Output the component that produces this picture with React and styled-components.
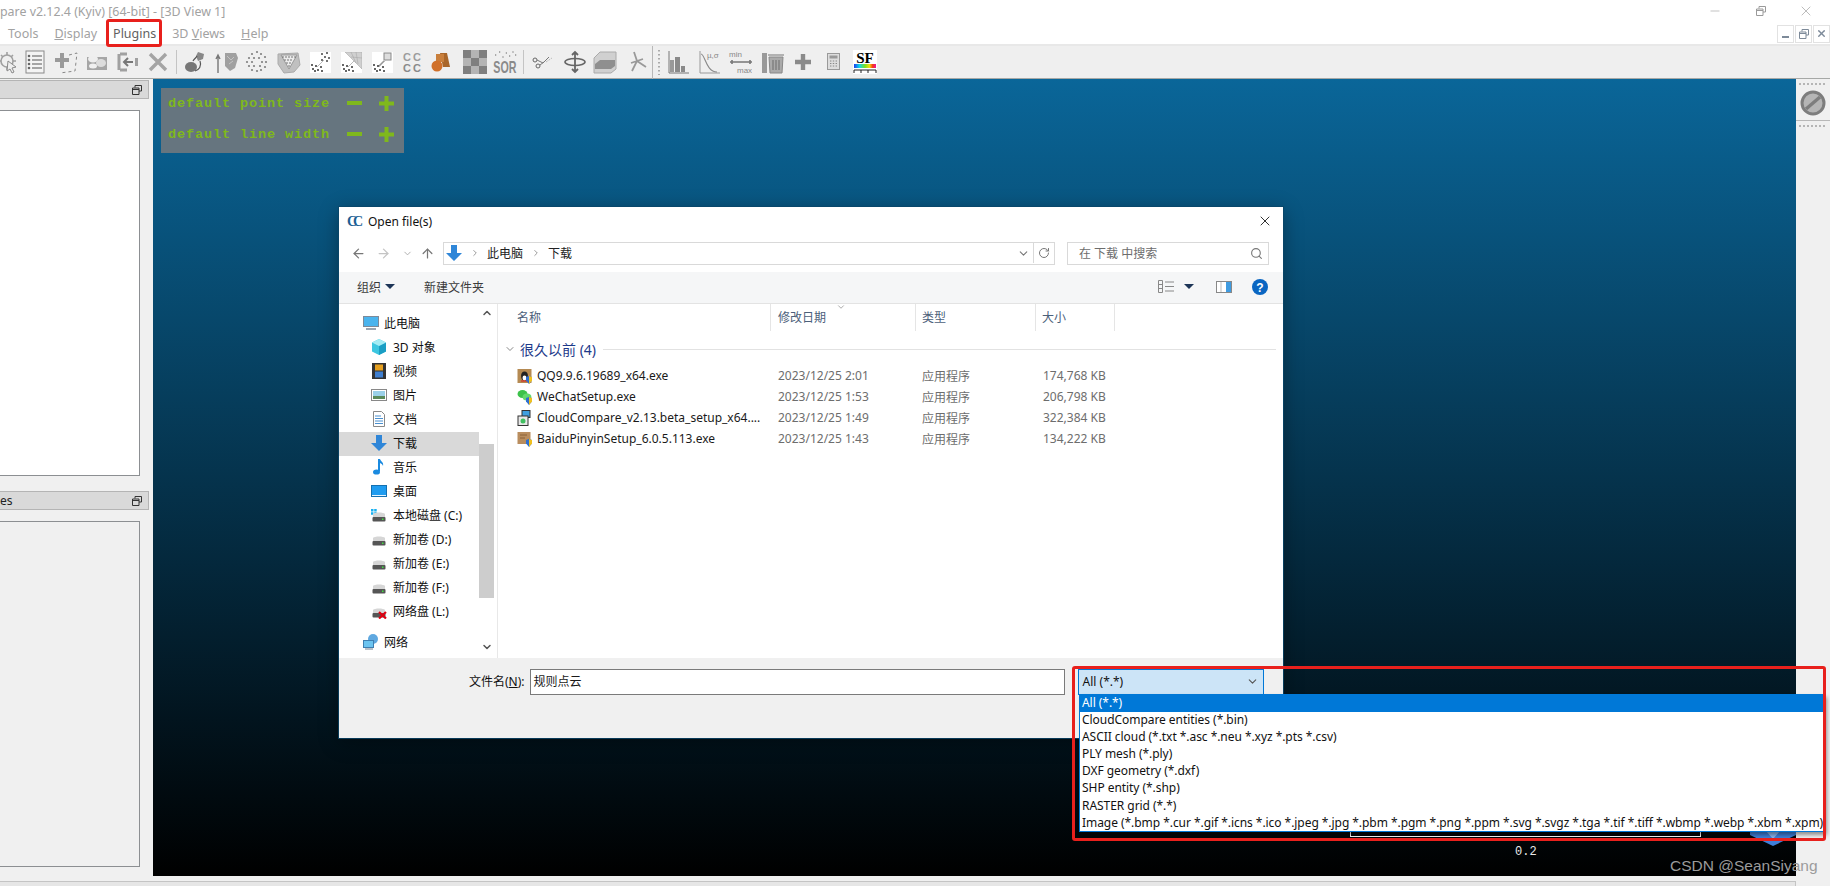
import React from "react"
import styled, { createGlobalStyle } from "styled-components"
import { ChevronDown, ChevronRight, ChevronUp, ArrowLeft, ArrowRight, ArrowUp, RotateCw, Search, X, Minus } from "lucide-react"

const GlobalStyle = createGlobalStyle`
	html, body { margin: 0; padding: 0; background: #f0f0f0; overflow: hidden; }
	* { box-sizing: border-box; }
	body { font-family: "Noto Sans", "Noto Sans CJK SC", sans-serif; font-size: 12px; }
`

const Page = styled.div`
	position: relative;
	width: 1830px;
	height: 886px;
	overflow: hidden;
	display: flex;
	flex-direction: column;
`

/* window chrome */
const TitleBar = styled.div`
	height: 22px;
	background: #fff;
	display: flex;
	justify-content: space-between;
	align-items: center;
	color: #a2a2a2;
	font-size: 12.4px;
	white-space: nowrap;
`
const WinButtons = styled.div`
	display: flex;
	margin-right: 1px;
`
const WinButton = styled.div`
	width: 45.5px;
	height: 20px;
	display: flex;
	align-items: center;
	justify-content: center;
	color: #9a9a9a;
`
const MenuBar = styled.div`
	height: 22px;
	background: #fff;
	display: flex;
	align-items: center;
	padding-left: 8px;
	gap: 16px;
	color: #a2a2a2;
	font-size: 12.5px;
`
const MenuItem = styled.div`
	position: relative;
	color: ${(props) => (props.$active ? "#5f5f5f" : "#a2a2a2")};
	${(props) =>
		props.$active
			? `
        &::after {
            content: "";
            position: absolute;
            left: -7px;
            right: -6px;
            top: -6px;
            bottom: -5px;
            border: 3px solid #e8201c;
            border-radius: 3px;
        }
    `
			: ""}
`
const MdiButtons = styled.div`
	margin-left: auto;
	display: flex;
	gap: 1px;
	padding-top: 1px;
`
const MdiButton = styled.div`
	width: 17px;
	height: 18px;
	border: 1px solid #e2e2e2;
	display: flex;
	align-items: center;
	justify-content: center;
`
const ToolBar = styled.div`
	height: 35px;
	background: #efefef;
	border-top: 2px solid #e8e8e8;
	border-bottom: 1px solid #a6a8a6;
	display: flex;
	align-items: center;
`
const Tool = styled.div`
	width: 24px;
	height: 26px;
	flex: none;
	margin-left: ${(props) => props.$left}px;
	display: flex;
	align-items: center;
	justify-content: center;
`
const Main = styled.div`
	flex: 1;
	display: flex;
	min-height: 0;
`
const CenterColumn = styled.div`
	width: 1796px;
	display: flex;
	flex-direction: column;
`
const Workspace = styled.div`
	height: 797px;
	display: flex;
`
const StatusGap = styled.div`
	height: 5px;
	background: #f0f0f0;
`
const StatusBar = styled.div`
	flex: 1;
	background: #e6e6e6;
	border-top: 1px solid #c4c4c4;
	border-right: 1px solid #c4c4c4;
`

/* left docks */
const LeftPanel = styled.div`
	width: 153px;
	flex: none;
	background: #f0f0f0;
	padding-top: 1px;
`
const DockTitle = styled.div`
	width: 149px;
	height: 19px;
	background: #d9d9d9;
	border: 1px solid #b4b4b4;
	border-left: none;
	margin-top: ${(props) => props.$top || 0}px;
	display: flex;
	align-items: center;
	justify-content: space-between;
	padding-right: 6px;
	font-size: 12px;
	color: #222;
`
const DockBox = styled.div`
	width: 140px;
	height: ${(props) => props.$height}px;
	margin-top: 11px;
	background: ${(props) => (props.$white ? "#fff" : "#f0f0f0")};
	border: 1px solid #8c8f92;
	border-left: none;
`

/* 3D view */
const Viewport = styled.div`
	position: relative;
	flex: 1;
	background: linear-gradient(180deg, #0a6699 0%, #000 100%);
`
const HotZone = styled.div`
	position: absolute;
	left: 8px;
	top: 9px;
	width: 243px;
	height: 65px;
	background: #66757f;
	padding: 0 7px 3px;
	display: flex;
	flex-direction: column;
	justify-content: space-around;
`
const HotRow = styled.div`
	display: flex;
	align-items: center;
	color: #7fb81c;
	font-family: "Liberation Mono", monospace;
	font-weight: 700;
	font-size: 13.5px;
	letter-spacing: 0.9px;
	white-space: nowrap;
`
const HotLabel = styled.span`
	width: 179px;
`
const ScaleBar = styled.div`
	position: absolute;
	left: 1197px;
	top: 753px;
	width: 351px;
	height: 5px;
	border: 1px solid #fff;
	border-top: none;
`
const ScaleLabel = styled.div`
	position: absolute;
	left: 1362px;
	top: 766px;
	color: #e8e8e8;
	font-family: "Liberation Mono", monospace;
	font-size: 12px;
`
const Pivot = styled.svg`
	position: absolute;
	right: 0;
	top: 750px;
`
const Watermark = styled.div`
	position: absolute;
	left: 1670px;
	top: 857px;
	color: #9b9b9b;
	font-family: "Liberation Sans", sans-serif;
	font-size: 15.5px;
	white-space: nowrap;
	z-index: 4;
`
const RightBar = styled.div`
	flex: 1;
	background: #f0f0f0;
	display: flex;
	flex-direction: column;
	align-items: center;
	padding-top: 4px;
`
const Grip = styled.div`
	width: 28px;
	height: 2px;
	background: repeating-linear-gradient(90deg, #b5b5b5 0 2px, transparent 2px 4px);
`
const RightTool = styled.div`
	width: 100%;
	height: 36px;
	display: flex;
	align-items: center;
	justify-content: center;
	border-bottom: 1px solid #b8b8b8;
	margin-bottom: 4px;
`

/* file dialog */
const Dialog = styled.div`
	position: absolute;
	left: 186px;
	top: 128px;
	width: 944px;
	height: 531px;
	z-index: 1;
	background: #fff;
	box-shadow: 0 0 0 1px rgba(10, 70, 105, 0.8), 0 4px 18px rgba(0, 0, 0, 0.35);
	display: flex;
	flex-direction: column;
	color: #1a1a1a;
`
const DialogTitle = styled.div`
	height: 35px;
	flex: none;
	display: flex;
	align-items: center;
	padding: 0 10px 7px 8px;
	gap: 5px;
	font-size: 12px;
	color: #111;
`
const CloseX = styled.div`
	margin-left: auto;
	display: flex;
`
const AddressRow = styled.div`
	height: 23px;
	flex: none;
	display: flex;
	align-items: center;
	padding-left: 11px;
`
const NavGlyph = styled.div`
	width: ${(props) => props.$w}px;
	display: flex;
	justify-content: center;
	color: ${(props) => props.$color};
`
const AddressBox = styled.div`
	width: 612px;
	height: 23px;
	margin-left: 3px;
	border: 1px solid #d9d9d9;
	display: flex;
	align-items: center;
	padding: 0 0 1px 2px;
	color: #222;
`
const Crumb = styled.span`
	margin-right: ${(props) => props.$gap || 0}px;
`
const AddressEnd = styled.div`
	margin-left: auto;
	height: 100%;
	display: flex;
	align-items: center;
`
const RefreshCell = styled.div`
	width: 21px;
	height: 100%;
	margin-left: 3px;
	border-left: 1px solid #d9d9d9;
	display: flex;
	align-items: center;
	justify-content: center;
	color: #777;
`
const SearchBox = styled.div`
	width: 202px;
	height: 23px;
	margin-left: 12px;
	border: 1px solid #d9d9d9;
	display: flex;
	align-items: center;
	justify-content: space-between;
	padding: 0 5px 1px 11px;
	color: #6d6d6d;
`
const CommandBar = styled.div`
	height: 32px;
	flex: none;
	margin-top: 7px;
	background: #f5f6f7;
	border-bottom: 1px solid #e3e3e3;
	display: flex;
	align-items: center;
	padding: 0 0 2px 18px;
	color: #3b3b3b;
`
const CommandRight = styled.div`
	margin-left: auto;
	display: flex;
	align-items: center;
	padding-right: 15px;
`
const DownCaret = styled.span`
	width: 0;
	height: 0;
	border-left: 5px solid transparent;
	border-right: 5px solid transparent;
	border-top: 5px solid #1d3557;
	margin: ${(props) => props.$margin};
`
const NewFolder = styled.span`
	margin-left: 29px;
`
const Body = styled.div`
	height: 354px;
	flex: none;
	display: flex;
`
const NavPane = styled.div`
	width: 140px;
	flex: none;
	padding-top: 8px;
`
const NavRow = styled.div`
	height: 24px;
	display: flex;
	align-items: center;
	margin-top: ${(props) => props.$top || 0}px;
	padding-left: ${(props) => props.$indent}px;
	padding-bottom: 2px;
	background: ${(props) => (props.$selected ? "#d9d9d9" : "transparent")};
	color: #111;
	gap: ${(props) => props.$gap || 6}px;
	white-space: nowrap;
`
const NavIcon = styled.span`
	width: 16px;
	height: 16px;
	flex: none;
	display: flex;
`
const ScrollTrack = styled.div`
	width: 15px;
	flex: none;
	display: flex;
	flex-direction: column;
	align-items: center;
	color: #555;
	padding-top: 3px;
`
const ScrollThumb = styled.div`
	width: 15px;
	height: 154px;
	margin-top: 125px;
	background: #cdcdcd;
`
const ScrollDown = styled.div`
	margin-top: auto;
	padding-bottom: 1px;
`
const ListPane = styled.div`
	flex: 1;
	margin-left: 3px;
	border-left: 1px solid #e8e8e8;
`
const ListGrid = styled.div`
	display: grid;
	grid-template-columns: 273px 145px 120px 79px;
	height: ${(props) => props.$height}px;
	padding-bottom: ${(props) => props.$lift || 0}px;
	align-items: center;
`
const HeaderCell = styled.div`
	position: relative;
	height: 100%;
	display: flex;
	align-items: center;
	padding-left: ${(props) => props.$pad}px;
	padding-bottom: 2px;
	border-right: 1px solid #e5e5e5;
	color: #4c607a;
`
const SortMark = styled.span`
	position: absolute;
	left: 65px;
	top: -2px;
	display: flex;
	color: #9a9a9a;
`
const GroupRow = styled.div`
	height: 20px;
	margin-top: 9px;
	margin-bottom: 6px;
	padding: 0 7px 2px 6px;
	display: flex;
	align-items: center;
	gap: 4px;
	color: #1e3a8a;
	font-size: 14px;
`
const GroupLine = styled.div`
	flex: 1;
	height: 1px;
	margin-left: 3px;
	background: #e2e2e2;
`
const NameCell = styled.div`
	display: flex;
	align-items: center;
	gap: 4px;
	padding-left: 19px;
	color: #1a1a1a;
	white-space: nowrap;
`
const InfoCell = styled.div`
	padding-left: ${(props) => props.$pad}px;
	color: #6d6d6d;
	white-space: nowrap;
`
const Footer = styled.div`
	flex: 1;
	background: #f0f0f0;
	padding: 11px 0 0 130px;
	display: flex;
	align-items: flex-start;
	position: relative;
`
const FileLabel = styled.label`
	height: 26px;
	display: flex;
	align-items: center;
	padding-bottom: 2px;
	color: #111;
`
const FileInput = styled.div`
	width: 535px;
	height: 26px;
	margin-left: 5px;
	background: #fff;
	border: 1px solid #7a7a7a;
	display: flex;
	align-items: center;
	padding: 0 0 2px 3px;
`
const Combo = styled.div`
	width: 186px;
	height: 26px;
	margin-left: 13px;
	background: #cce4f7;
	border: 1px solid #0078d7;
	display: flex;
	align-items: center;
	justify-content: space-between;
	padding: 0 4px 2px;
	color: #111;
`
const Popup = styled.div`
	position: absolute;
	left: 740px;
	top: 36px;
	width: 745px;
	height: 138px;
	background: #fff;
	border: 1px solid #0078d7;
	box-shadow: 3px 3px 4px rgba(0, 0, 0, 0.4);
	z-index: 2;
`
const PopupItem = styled.div`
	height: 17.1px;
	line-height: 16px;
	padding-left: 2px;
	background: ${(props) => (props.$selected ? "#0078d7" : "transparent")};
	color: ${(props) => (props.$selected ? "#fff" : "#111")};
	white-space: nowrap;
	font-size: 12px;
	letter-spacing: -0.05px;
`
const RedFrame = styled.div`
	position: absolute;
	left: 1072px;
	top: 666px;
	width: 754px;
	height: 175px;
	border: 3px solid #e8201c;
	border-radius: 3px;
	pointer-events: none;
	z-index: 3;
`

/* toolbar drawings */
const G = "#8a8a8a"
const Dots = ({ pts, r = 1.3, fill = "#555" }) => pts.map(([x, y], i) => <circle key={i} cx={x} cy={y} r={r} fill={fill} />)
const Svg = ({ w = 24, h = 24, children }) => (
	<svg width={w} height={h} viewBox={`0 0 ${w} ${h}`}>
		{children}
	</svg>
)
const GearIcon = () => (
	<Svg>
		<circle cx="11" cy="11" r="6" fill="none" stroke="#a0a0a0" strokeWidth="1.6" />
		<path d="M11 2v3M11 17v3M2 11h3M17 11h3M5 5l2 2M15 15l2 2M17 5l-2 2" stroke="#a0a0a0" strokeWidth="1.6" />
		<path d="M12 11l8 6-4 1 2 4-2 1-2-4-3 2z" fill="#eee" stroke={G} />
	</Svg>
)
const ListIcon = () => (
	<Svg>
		<rect x="3" y="1" width="18" height="22" fill="#f4f4f4" stroke={G} />
		<path d="M9 6h10M9 10h10M9 14h10M9 18h10" stroke={G} strokeWidth="1.3" />
		<Dots pts={[[6, 6], [6, 10], [6, 14], [6, 18]]} fill="#666" />
	</Svg>
)
const PlusBoxIcon = () => (
	<Svg>
		<path d="M1 10h14M8 3v15" stroke="#9a9a9a" strokeWidth="4" />
		<path d="M15 5l8-2-2 18-15 2" fill="none" stroke="#888" strokeDasharray="3 3" />
	</Svg>
)
const CloudsIcon = () => (
	<Svg>
		<path d="M2 7h20v13H2z" fill="#a6a6a6" />
		<ellipse cx="8" cy="9" rx="5" ry="3.5" fill="#eee" />
		<ellipse cx="16" cy="13" rx="5" ry="4" fill="#ddd" />
		<ellipse cx="8" cy="16" rx="4" ry="2.5" fill="#f0f0f0" />
	</Svg>
)
const MergeIcon = () => (
	<Svg>
		<path d="M4 4h7M4 20h7M3 4v16" stroke="#a0a0a0" strokeWidth="3" fill="none" />
		<path d="M19 8h3v8h-3z" fill="#a0a0a0" />
		<path d="M17 12H9M12 8l-4 4 4 4" stroke="#777" strokeWidth="2" fill="none" />
	</Svg>
)
const CrossIcon = () => (
	<Svg>
		<path d="M4 4l16 16M20 4L4 20" stroke="#a4a4a4" strokeWidth="3.4" />
	</Svg>
)
const Sep = ({ h = 24, c = "#c4c4c4" }) => <svg width="2" height={h}><rect width="1" height={h} fill={c} /></svg>
const BlobIcon = () => (
	<Svg>
		<ellipse cx="8" cy="17" rx="6" ry="5" fill="#777" />
		<path d="M15 2l6 2-1 5-5 2-2-5z" fill="#888" />
		<path d="M17 11c2 5-1 9-5 10M10 11c1-2 3-3 4-5" stroke="#555" fill="none" strokeWidth="1.2" />
	</Svg>
)
const ShieldIcon = () => (
	<Svg>
		<path d="M3 23V6M1 9l2-4 2 4" stroke="#777" strokeWidth="1.4" fill="none" />
		<path d="M10 3h11l2 5-3 10-5 3-5-5z" fill="#a0a0a0" />
		<path d="M12 6l4 4 3-3M14 14l4-3" stroke="#c4c4c4" fill="none" />
	</Svg>
)
const DotRingIcon = () => (
	<Svg>
		<Dots r={1.1} fill="#808080" pts={[[12, 2], [7, 4], [16, 4], [20, 7], [4, 8], [9, 8], [14, 8], [21, 12], [2, 12], [7, 12], [17, 12], [4, 16], [9, 16], [15, 16], [20, 17], [7, 20], [12, 21], [16, 20]]} />
	</Svg>
)
const MeshIcon = () => (
	<Svg>
		<path d="M1 4l20-1 2 12-6 7-10 1-6-9z" fill="#c0c0c0" stroke="#aaa" />
		<path d="M4 5l16 0-8 14z" fill="#ececec" stroke="#999" />
		<Dots r={0.8} fill="#666" pts={[[6, 7], [9, 7], [12, 7], [15, 7], [18, 7], [8, 10], [11, 10], [14, 10], [10, 13], [13, 13], [12, 16]]} />
	</Svg>
)
const ScatterIcon = ({ corner }) => (
	<svg width="21" height="21" viewBox="0 0 21 21">
		<rect width="21" height="21" fill="#fff" />
		{corner === "mesh" && <path d="M4 0h17v17z M10 0l5 11M21 6L10 5M15 0l2 12" fill="#d0d0d0" stroke="#aaa" strokeWidth=".6" />}
		{corner === "box" && <g><rect x="12" y="1" width="7" height="7" fill="#ddd" stroke="#888" /><path d="M12 9l-5 5" stroke="#999" strokeWidth="1.4" /></g>}
		{corner === "dots" && <Dots r={1} fill="#444" pts={[[12, 2], [17, 1], [15, 5], [19, 6], [17, 9], [12, 8]]} />}
		<path d="M7 15l7-7" stroke="#bbb" strokeWidth="1" />
		<Dots r={1} fill="#333" pts={[[2, 13], [6, 14], [3, 17], [8, 18], [11, 15], [5, 19], [12, 19]]} />
	</svg>
)
const CcIcon = () => (
	<Svg>
		<text x="2" y="11" fontFamily="Liberation Sans" fontWeight="700" fontSize="11" letterSpacing="2" fill="#9c9c9c">CC</text>
		<text x="2" y="22" fontFamily="Liberation Sans" fontWeight="700" fontSize="11" letterSpacing="2" fill="#8a8a8a">CC</text>
	</Svg>
)
const OrangeIcon = () => (
	<Svg>
		<path d="M12 3h7l3 14h-7z" fill="#a9662a" />
		<rect x="8" y="4" width="8" height="8" fill="#c97f3c" />
		<circle cx="9" cy="16" r="5.5" fill="#d0702a" />
	</Svg>
)
const CheckerIcon = () => (
	<svg width="24" height="24">
		{[0, 1, 2].map((r) => [0, 1, 2].map((c) => <rect key={`${r}${c}`} x={c * 8} y={r * 8} width="8" height="8" fill={(r + c) % 2 ? "#b4b4b4" : "#7f7f7f"} />))}
	</svg>
)
const SorIcon = () => (
	<svg width="24" height="24" viewBox="0 0 36 24" preserveAspectRatio="none">
		<text x="0.5" y="23" fontFamily="Liberation Sans" fontWeight="700" fontSize="16" fill="#8a8a8a">SOR</text>
		<Dots r={1} fill="#999" pts={[[4, 5], [10, 2], [15, 7], [20, 3], [25, 6], [30, 2], [34, 5]]} />
	</svg>
)
const ScissorsIcon = () => (
	<Svg>
		<circle cx="4" cy="10" r="2" fill="none" stroke="#666" />
		<circle cx="7" cy="16" r="2" fill="none" stroke="#666" />
		<path d="M6 10l6 3 6-6M9 15l4-3" stroke="#777" fill="none" />
		<path d="M15 12l6-4" stroke="#bbb" strokeDasharray="2 1" />
	</Svg>
)
const MoveIcon = () => (
	<Svg>
		<path d="M12 2v20M9 5l3-3 3 3M9 19l3 3 3-3" stroke="#666" strokeWidth="1.8" fill="none" />
		<ellipse cx="12" cy="12" rx="10" ry="3.5" stroke="#666" strokeWidth="1.6" fill="none" />
	</Svg>
)
const SliceIcon = () => (
	<Svg>
		<path d="M1 8l6-6h16v17l-5 4H1z" fill="#d0d0d0" stroke="#aaa" />
		<path d="M2 14l5-4h15v6l-4 3H2z" fill="#8f8f8f" />
	</Svg>
)
const CompassIcon = () => (
	<Svg>
		<path d="M9 2l3 9-5 10M12 11l9 6M6 13l12-4" stroke="#999" strokeWidth="1.8" fill="none" />
	</Svg>
)
const GripTall = () => (
	<svg width="2" height="26">
		{[1, 5, 9, 13, 17, 21, 25].map((y) => <rect key={y} y={y} width="2" height="1.5" fill="#aaa" />)}
	</svg>
)
const HistIcon = () => (
	<Svg>
		<path d="M2 1v22h20" stroke="#777" strokeWidth="1" fill="none" />
		<rect x="3" y="10" width="4" height="12" fill="#999" />
		<rect x="8" y="7" width="5" height="15" fill="#8a8a8a" />
		<rect x="14" y="16" width="4" height="6" fill="#8a8a8a" />
	</Svg>
)
const GaussIcon = () => (
	<Svg>
		<path d="M2 1v22h20" stroke="#999" fill="none" />
		<path d="M3 4c4 0 5 18 16 18" stroke="#888" strokeWidth="1.1" fill="none" />
		<text x="9" y="8" fontFamily="Liberation Sans" fontSize="8" fill="#888">µ,σ</text>
	</Svg>
)
const MinMaxIcon = () => (
	<svg width="28" height="24">
		<text x="1" y="7" fontFamily="Liberation Sans" fontSize="8" fill="#888">min</text>
		<text x="9" y="23" fontFamily="Liberation Sans" fontSize="8" fill="#888">max</text>
		<path d="M2 12h22M4 10v4M22 10v4" stroke="#777" strokeWidth="1.6" />
	</svg>
)
const TrashIcon = () => (
	<Svg>
		<rect x="1" y="3" width="5" height="20" fill="#999" />
		<path d="M8 7h14l-1 16H9z" fill="#aaa" stroke="#888" />
		<path d="M7 5h16M12 10v10M15 10v10M18 10v10" stroke="#777" strokeWidth="1.2" />
	</Svg>
)
const FatPlusIcon = () => (
	<svg width="16" height="16">
		<path d="M8 0v16M0 8h16" stroke="#8a8a8a" strokeWidth="4.4" />
	</svg>
)
const CalcIcon = () => (
	<svg width="14" height="18">
		<rect x=".5" y=".5" width="12" height="16" fill="#ddd" stroke="#999" />
		<rect x="2.5" y="2.5" width="8" height="3" fill="#999" />
		<path d="M3 8h7M3 10.5h7M3 13h7" stroke="#888" strokeDasharray="1.4 1.4" />
	</svg>
)
const SfIcon = () => (
	<svg width="24" height="24">
		<rect width="24" height="24" fill="#fff" />
		<text x="12" y="13" textAnchor="middle" fontFamily="Liberation Serif" fontWeight="700" fontSize="15" fill="#000">SF</text>
		<defs>
			<linearGradient id="rainbow">
				<stop offset="0" stopColor="#1c3cf0" />
				<stop offset=".25" stopColor="#10d8e8" />
				<stop offset=".5" stopColor="#7be020" />
				<stop offset=".7" stopColor="#f2e010" />
				<stop offset=".85" stopColor="#f23a10" />
				<stop offset="1" stopColor="#f010a0" />
			</linearGradient>
		</defs>
		<rect x="1" y="14" width="22" height="4" fill="url(#rainbow)" />
		<path d="M1 20h22M1 20v3M8 20v3M15 20v3M23 20v3" stroke="#222" fill="none" />
	</svg>
)

const TOOLS = [
	[8, <GearIcon />], [35, <ListIcon />], [66, <PlusBoxIcon />], [97, <CloudsIcon />], [128, <MergeIcon />], [158, <CrossIcon />],
	[177, <Sep />], [195, <BlobIcon />], [227, <ShieldIcon />], [257, <DotRingIcon />], [289, <MeshIcon />],
	[320, <ScatterIcon corner="dots" />], [351, <ScatterIcon corner="mesh" />], [382, <ScatterIcon corner="box" />],
	[413, <CcIcon />], [440, <OrangeIcon />], [475, <CheckerIcon />], [505, <SorIcon />], [524, <Sep />],
	[543, <ScissorsIcon />], [575, <MoveIcon />], [605, <SliceIcon />], [637, <CompassIcon />], [653, <Sep h={33} c="#b8b8b8" />],
	[659, <GripTall />], [679, <HistIcon />], [710, <GaussIcon />], [740, <MinMaxIcon />], [773, <TrashIcon />],
	[803, <FatPlusIcon />], [834, <CalcIcon />], [865, <SfIcon />],
]

const RestoreIcon = ({ color = "#333" }) => (
	<svg width="10" height="10" viewBox="0 0 10 10">
		<path d="M3 2.5V.5h6.5V6H7M.5 3h6.5v6.5H.5zM.5 4.5h6.5" fill="none" stroke={color} />
	</svg>
)

/* overlay +/- */
const HotMinus = () => (
	<svg width="15" height="5">
		<rect width="15" height="4" fill="#7fb81c" />
	</svg>
)
const HotPlusMark = styled.svg`
	margin-left: 17px;
`
const HotPlus = () => (
	<HotPlusMark width="15" height="15">
		<path d="M7.5 0v15M0 7.5h15" stroke="#7fb81c" strokeWidth="4" />
	</HotPlusMark>
)

/* nav and file icons */
const Ic = ({ children, w = 16 }) => (
	<svg width={w} height="16" viewBox="0 0 16 16">
		{children}
	</svg>
)
const PcIcon = () => <Ic><rect x="0.5" y="1.5" width="15" height="10" fill="#4ab4ee" stroke="#7d8a99" /><path d="M3 14h10" stroke="#9aa5b1" strokeWidth="2" /></Ic>
const CubeIcon = () => <Ic><path d="M8 0l7 3.5v9L8 16l-7-3.5v-9z" fill="#3cc6e0" /><path d="M8 7v9l7-3.5v-9z" fill="#1a9ec4" /><path d="M1 3.5L8 0l7 3.5L8 7z" fill="#a4ecf4" /></Ic>
const FilmIcon = () => <Ic><rect x="1" y="0" width="14" height="16" fill="#333" /><rect x="4" y="1.5" width="8" height="6" fill="#e6a020" /><rect x="4" y="8.5" width="8" height="6" fill="#3f7fd0" /></Ic>
const PicIcon = () => <Ic><rect x="0.5" y="2.5" width="15" height="11" fill="#fff" stroke="#888" /><rect x="2" y="4" width="12" height="5" fill="#9ad0e8" /><rect x="2" y="9" width="12" height="3" fill="#5a8a5a" /></Ic>
const DocIcon = () => <Ic><path d="M2.5.5h8l3 3v12h-11z" fill="#fff" stroke="#888" /><path d="M4 5h6M4 7.5h8M4 10h8M4 12.5h8" stroke="#4a90d0" /></Ic>
const DownIcon = () => <Ic><path d="M5 0h6v8h5l-8 8-8-8h5z" fill="#2f86d8" /></Ic>
const MusicIcon = () => <Ic><path d="M8 0v12" stroke="#1a8ae0" strokeWidth="2" /><ellipse cx="5.5" cy="13" rx="3.5" ry="2.6" fill="#1a8ae0" /><path d="M9 0c1 3 4 3 3 7-.5-2-2-2.5-3-3z" fill="#1a8ae0" /></Ic>
const DesktopIcon = () => <Ic><rect x="0.5" y="2.5" width="15" height="11" fill="#1f9cf0" stroke="#1470b0" /><rect x="1" y="12" width="14" height="1" fill="#e6f4ff" /></Ic>
const DriveIcon = ({ win, cross }) => (
	<Ic>
		{win && <path d="M0 2h2.5v2.5H0zM3.2 2h2.5v2.5H3.2zM0 5.2h2.5v2.5H0zM3.2 5.2h2.5v2.5H3.2z" fill="#18b0f0" />}
		<path d="M2 7c1-2 11-2 12 0v4H2z" fill="#d6d6d6" />
		<rect x="1.5" y="10" width="13" height="4.5" rx="1" fill="#555" />
		<rect x="11" y="11.5" width="1.5" height="1.5" fill="#40e040" />
		{cross && <path d="M8 9l7 6.5M15 9l-7 6.5" stroke="#e00010" strokeWidth="2.2" />}
	</Ic>
)
const NetIcon = () => <Ic><circle cx="10" cy="5" r="5" fill="#5fa8e0" /><rect x="0.5" y="6.5" width="10" height="7" fill="#6cc4f0" stroke="#3f7fb0" /><path d="M2 15h8" stroke="#9aa5b1" strokeWidth="1.4" /></Ic>

const Shield = () => <g><path d="M9 9l3-1 3 1v3.5L12 16l-3-3.5z" fill="#2f6fd0" /><path d="M12 8l3 1v3.5L12 16z" fill="#f0c020" /></g>
const QqFile = () => <Ic><rect x="0.5" y="1" width="14" height="14" fill="#b58a52" /><ellipse cx="7.5" cy="8" rx="3.4" ry="4.5" fill="#222" /><ellipse cx="7.5" cy="10" rx="2" ry="2.4" fill="#fff" /><path d="M4 13h7" stroke="#e02020" /><Shield /></Ic>
const WeChatFile = () => <Ic><ellipse cx="5.5" cy="5" rx="5" ry="4" fill="#3cc24a" /><ellipse cx="10" cy="8" rx="4.4" ry="3.6" fill="#62d86c" /><Shield /></Ic>
const CcFile = () => <Ic><rect x="5" y="0.5" width="8" height="7" fill="#3f9fe0" stroke="#333" /><rect x="1" y="6" width="10" height="9.5" fill="#e8e8e8" stroke="#333" /><circle cx="6" cy="11" r="2.5" fill="#40c060" /></Ic>
const BaiduFile = () => <Ic><rect x="0.5" y="1" width="13" height="12" fill="#b98d5e" /><path d="M3 4h7M3 7h5" stroke="#8a6238" /><Shield /></Ic>

const NAV = [
	{ label: "此电脑", Icon: PcIcon, indent: 24, gap: 5 },
	{ label: "3D 对象", Icon: CubeIcon, indent: 32 },
	{ label: "视频", Icon: FilmIcon, indent: 32 },
	{ label: "图片", Icon: PicIcon, indent: 32 },
	{ label: "文档", Icon: DocIcon, indent: 32 },
	{ label: "下载", Icon: DownIcon, indent: 32, selected: true },
	{ label: "音乐", Icon: MusicIcon, indent: 32 },
	{ label: "桌面", Icon: DesktopIcon, indent: 32 },
	{ label: "本地磁盘 (C:)", Icon: () => <DriveIcon win />, indent: 32 },
	{ label: "新加卷 (D:)", Icon: DriveIcon, indent: 32 },
	{ label: "新加卷 (E:)", Icon: DriveIcon, indent: 32 },
	{ label: "新加卷 (F:)", Icon: DriveIcon, indent: 32 },
	{ label: "网络盘 (L:)", Icon: () => <DriveIcon cross />, indent: 32 },
	{ label: "网络", Icon: NetIcon, indent: 24, gap: 5, top: 7 },
]

const FILES = [
	{ name: "QQ9.9.6.19689_x64.exe", date: "2023/12/25 2:01", size: "174,768 KB", Icon: QqFile },
	{ name: "WeChatSetup.exe", date: "2023/12/25 1:53", size: "206,798 KB", Icon: WeChatFile },
	{ name: "CloudCompare_v2.13.beta_setup_x64....", date: "2023/12/25 1:49", size: "322,384 KB", Icon: CcFile },
	{ name: "BaiduPinyinSetup_6.0.5.113.exe", date: "2023/12/25 1:43", size: "134,222 KB", Icon: BaiduFile },
]

const FILTERS = [
	"All (*.*)",
	"CloudCompare entities (*.bin)",
	"ASCII cloud (*.txt *.asc *.neu *.xyz *.pts *.csv)",
	"PLY mesh (*.ply)",
	"DXF geometry (*.dxf)",
	"SHP entity (*.shp)",
	"RASTER grid (*.*)",
	"Image (*.bmp *.cur *.gif *.icns *.ico *.jpeg *.jpg *.pbm *.pgm *.png *.ppm *.svg *.svgz *.tga *.tif *.tiff *.wbmp *.webp *.xbm *.xpm)",
]

const FileDialog = () => (
	<Dialog>
		<DialogTitle>
			<svg width="16" height="14" viewBox="0 0 16 14">
				<text x="0" y="12" fontFamily="Liberation Serif" fontWeight="700" fontSize="14" letterSpacing="-4" fill="#1c5f94">CC</text>
			</svg>
			Open file(s)
			<CloseX><X size={16} strokeWidth={1.3} color="#111" /></CloseX>
		</DialogTitle>
		<AddressRow>
			<NavGlyph $w={16} $color="#777"><ArrowLeft size={15} /></NavGlyph>
			<NavGlyph $w={34} $color="#c4c4c4"><ArrowRight size={15} /></NavGlyph>
			<NavGlyph $w={14} $color="#aaa"><ChevronDown size={11} /></NavGlyph>
			<NavGlyph $w={26} $color="#777"><ArrowUp size={15} /></NavGlyph>
			<AddressBox>
				<DownIcon />
				<NavGlyph $w={25} $color="#888"><ChevronRight size={10} /></NavGlyph>
				<Crumb>此电脑</Crumb>
				<NavGlyph $w={25} $color="#888"><ChevronRight size={10} /></NavGlyph>
				<Crumb>下载</Crumb>
				<AddressEnd>
					<ChevronDown size={13} color="#777" />
					<RefreshCell><RotateCw size={12} /></RefreshCell>
				</AddressEnd>
			</AddressBox>
			<SearchBox>
				在 下载 中搜索
				<Search size={13} color="#777" />
			</SearchBox>
		</AddressRow>
		<CommandBar>
			组织
			<DownCaret $margin="0 0 0 4px" />
			<NewFolder>新建文件夹</NewFolder>
			<CommandRight>
				<svg width="16" height="13" viewBox="0 0 16 13">
					<path d="M.5.5h4v12h-4zM.5 4.5h4M.5 8.5h4M7 2h9M7 6.5h9M7 11h9" fill="none" stroke="#888" />
				</svg>
				<DownCaret $margin="0 22px 0 10px" />
				<svg width="16" height="12" viewBox="0 0 16 12">
					<rect x=".5" y=".5" width="15" height="11" fill="#fff" stroke="#888" />
					<rect x="10" y="1" width="5" height="10" fill="#3f9be0" />
					<path d="M5 1v10" stroke="#bbb" />
				</svg>
				<HelpMark width="16" height="16" viewBox="0 0 16 16">
					<circle cx="8" cy="8" r="8" fill="#0a66c2" />
					<text x="8" y="12.5" textAnchor="middle" fontFamily="Liberation Sans" fontWeight="700" fontSize="12" fill="#fff">?</text>
				</HelpMark>
			</CommandRight>
		</CommandBar>
		<Body>
			<NavPane>
				{NAV.map(({ label, Icon, indent, gap, top, selected }) => (
					<NavRow key={label} $indent={indent} $gap={gap} $top={top} $selected={selected}>
						<NavIcon><Icon /></NavIcon>
						{label}
					</NavRow>
				))}
			</NavPane>
			<ScrollTrack>
				<ChevronUp size={12} strokeWidth={3} />
				<ScrollThumb />
				<ScrollDown><ChevronDown size={12} strokeWidth={3} /></ScrollDown>
			</ScrollTrack>
			<ListPane>
				<ListGrid $height={27}>
					<HeaderCell $pad={19}>名称</HeaderCell>
					<HeaderCell $pad={7}>
						<SortMark><ChevronDown size={10} /></SortMark>
						修改日期
					</HeaderCell>
					<HeaderCell $pad={6}>类型</HeaderCell>
					<HeaderCell $pad={6}>大小</HeaderCell>
				</ListGrid>
				<GroupRow>
					<ChevronDown size={12} color="#888" />
					很久以前 (4)
					<GroupLine />
				</GroupRow>
				{FILES.map(({ name, date, size, Icon }) => (
					<ListGrid key={name} $height={21} $lift={2}>
						<NameCell><Icon />{name}</NameCell>
						<InfoCell $pad={7}>{date}</InfoCell>
						<InfoCell $pad={6}>应用程序</InfoCell>
						<InfoCell $pad={7}>{size}</InfoCell>
					</ListGrid>
				))}
			</ListPane>
		</Body>
		<Footer>
			<FileLabel>文件名(<u>N</u>):</FileLabel>
			<FileInput>规则点云</FileInput>
			<Combo>
				All (*.*)
				<ChevronDown size={13} color="#555" />
			</Combo>
			<Popup>
				{FILTERS.map((f, i) => (
					<PopupItem key={f} $selected={i === 0}>{f}</PopupItem>
				))}
			</Popup>
		</Footer>
	</Dialog>
)

const HelpMark = styled.svg`
	margin-left: 20px;
`

export default function App() {
	let prev = -24
	return (
		<Page>
			<GlobalStyle />
			<TitleBar>
				<span>pare v2.12.4 (Kyiv) [64-bit] - [3D View 1]</span>
				<WinButtons>
					<WinButton><Minus size={14} strokeWidth={1} /></WinButton>
					<WinButton><RestoreIcon color="#9a9a9a" /></WinButton>
					<WinButton><X size={16} strokeWidth={1} /></WinButton>
				</WinButtons>
			</TitleBar>
			<MenuBar>
				<MenuItem>Tools</MenuItem>
				<MenuItem><u>D</u>isplay</MenuItem>
				<MenuItem $active>Plugins</MenuItem>
				<MenuItem>3D <u>V</u>iews</MenuItem>
				<MenuItem><u>H</u>elp</MenuItem>
				<MdiButtons>
					<MdiButton><svg width="8" height="8"><rect y="6" width="7" height="2" fill="#7d8a99" /></svg></MdiButton>
					<MdiButton><RestoreIcon color="#7d8a99" /></MdiButton>
					<MdiButton><X size={11} strokeWidth={3} color="#7d8a99" /></MdiButton>
				</MdiButtons>
			</MenuBar>
			<ToolBar>
				{TOOLS.map(([x, icon]) => {
					const left = x - prev - 24
					prev = x
					return <Tool key={x} $left={x === 8 ? -4 : left}>{icon}</Tool>
				})}
			</ToolBar>
			<Main>
				<CenterColumn>
					<Workspace>
						<LeftPanel>
							<DockTitle>
								<span />
								<RestoreIcon />
							</DockTitle>
							<DockBox $white $height={366} />
							<DockTitle $top={15}>
								<span>es</span>
								<RestoreIcon />
							</DockTitle>
							<DockBox $height={346} />
						</LeftPanel>
						<Viewport>
							<HotZone>
								<HotRow>
									<HotLabel>default point size</HotLabel>
									<HotMinus />
									<HotPlus />
								</HotRow>
								<HotRow>
									<HotLabel>default line width</HotLabel>
									<HotMinus />
									<HotPlus />
								</HotRow>
							</HotZone>
							<FileDialog />
							<ScaleBar />
							<ScaleLabel>0.2</ScaleLabel>
							<Pivot width="46" height="18" viewBox="0 0 46 18">
								<path d="M0 2h46v4L23 17 0 6z" fill="#3f7fd8" />
								<path d="M16 2l7 8 7-8z" fill="#8ab6f0" />
							</Pivot>
						</Viewport>
					</Workspace>
					<StatusGap />
					<StatusBar />
				</CenterColumn>
				<RightBar>
					<Grip />
					<RightTool>
						<svg width="26" height="26" viewBox="0 0 26 26">
							<circle cx="13" cy="13" r="11" fill="#b5b5b5" stroke="#7d7d7d" strokeWidth="3" />
							<path d="M6 19L20 7" stroke="#7d7d7d" strokeWidth="3.4" />
						</svg>
					</RightTool>
					<Grip />
				</RightBar>
			</Main>
			<RedFrame />
			<Watermark>CSDN @SeanSiyang</Watermark>
		</Page>
	)
}
